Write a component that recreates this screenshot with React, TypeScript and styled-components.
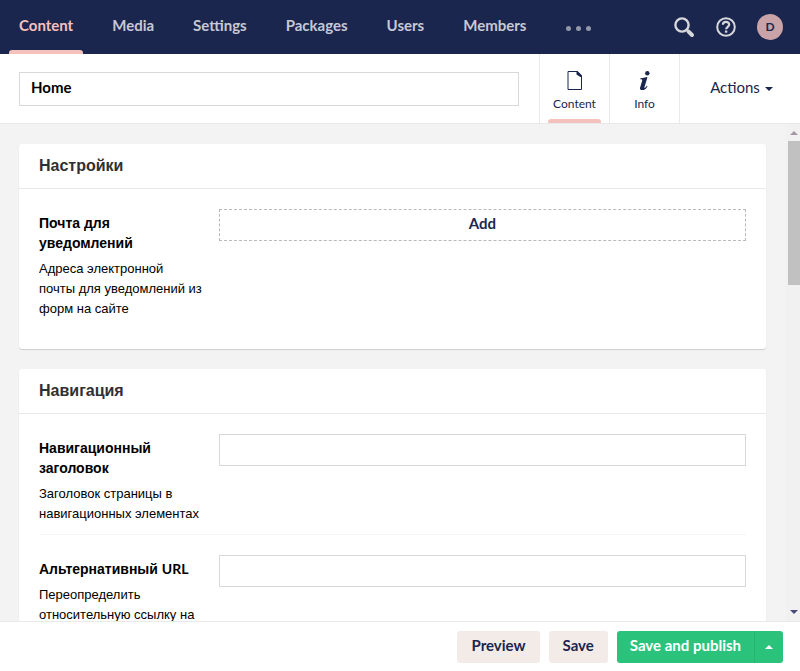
import React, { useState } from "react";
import styled, { createGlobalStyle } from "styled-components";

const LATIN = 'Lato, "Liberation Sans", sans-serif';
const CYRILLIC = '"Liberation Sans", Arial, sans-serif';
const NAVY = "#1b264f";
const PINK = "#f5c1bc";

const GlobalStyle = createGlobalStyle`
  *, *::before, *::after { box-sizing: border-box; }
  html, body, #root { height: 100%; margin: 0; }
  body { background: #fff; color: #000; font: 15px/20px ${LATIN}; overflow: hidden; }
  button, input { font: inherit; color: inherit; margin: 0; border-radius: 0; }
  button { padding: 0; border: 0; background: none; cursor: pointer; }
  h2, p { margin: 0; }
`;

const Shell = styled.div`
  display: flex;
  flex-direction: column;
  height: 100vh;
`;

const TopBar = styled.header`
  display: flex;
  flex: none;
  align-items: stretch;
  justify-content: space-between;
  height: 54px;
  padding-right: 17px;
  background: ${NAVY};
`;

const Sections = styled.nav`
  display: flex;
`;

const SectionLink = styled.a<{ $active?: boolean }>`
  display: flex;
  flex-direction: column;
  justify-content: space-between;
  padding: 15px 10px 0 9px;
  color: ${(p) => (p.$active ? PINK : "#c6c9d3")};
  font-weight: 700;
  text-decoration: none;

  span { padding: 0 10px; }

  &::after {
    content: "";
    height: 4px;
    border-radius: 3px 3px 0 0;
    background: ${(p) => (p.$active ? PINK : "transparent")};
  }
`;

const MoreButton = styled.button`
  display: flex;
  align-items: center;
  gap: 5px;
  padding: 3px 20px 0;

  i {
    width: 5px;
    height: 5px;
    border-radius: 50%;
    background: #9297a9;
  }
`;

const Tools = styled.div`
  display: flex;
  align-items: center;
  gap: 21px;
`;

const ToolButton = styled.button`
  display: flex;
  color: #d6d7da;
`;

const Avatar = styled.button`
  width: 26px;
  height: 26px;
  border-radius: 50%;
  background: #c9a3a7;
  color: ${NAVY};
  font-size: 12px;
  font-weight: 700;
  line-height: 26px;
`;

const EditorHeader = styled.div`
  display: flex;
  flex: none;
  height: 70px;
  padding-left: 19px;
  border-bottom: 1px solid #e9e9eb;
`;

const NameInput = styled.input`
  flex: 1;
  min-width: 0;
  height: 34px;
  margin: 18px 20px 0 0;
  padding: 0 11px 4px;
  border: 1px solid #d8d7d9;
  font-weight: 700;
  outline: none;
`;

const Tab = styled.button<{ $active?: boolean }>`
  display: flex;
  flex-direction: column;
  align-items: center;
  width: 70px;
  padding: 16px 8px 0;
  border-left: 1px solid #e9e9eb;
  color: ${NAVY};
  font-size: 12px;

  svg { flex: none; margin-bottom: 4px; }

  &::after {
    content: "";
    align-self: stretch;
    height: 4px;
    margin-top: auto;
    border-radius: 3px 3px 0 0;
    background: ${(p) => (p.$active ? PINK : "transparent")};
  }
`;

const ActionsButton = styled.button`
  display: flex;
  align-items: center;
  justify-content: center;
  gap: 5px;
  width: 121px;
  padding: 0 0 3px 3px;
  border-left: 1px solid #e9e9eb;
  color: ${NAVY};

  span { margin-top: 3px; }
`;

const Caret = styled.span<{ $up?: boolean }>`
  border: 4px solid transparent;
  border-width: ${(p) => (p.$up ? "0 4px 4px" : "4px 4px 0")};
  border-${(p) => (p.$up ? "bottom" : "top")}-color: currentColor;
`;

const Workspace = styled.div`
  display: flex;
  flex: 1;
  min-height: 0;
  background: #f3f3f3;
`;

const Pane = styled.main`
  display: flex;
  flex: 1;
  flex-direction: column;
  gap: 20px;
  min-width: 0;
  padding: 20px 20px 20px 19px;
  overflow: hidden;
`;

const ScrollTrack = styled.div`
  display: flex;
  flex-direction: column;
  align-items: center;
  width: 14px;
  padding: 7px 0 7px 2px;
  background: #f1f1f1;
  color: #a597a5;
`;

const ScrollThumb = styled.div`
  align-self: stretch;
  flex: 0 1 144px;
  margin: 6px 0 auto;
  background: #c1c1c1;
`;

const ScrollDown = styled.span`
  display: flex;
  color: #484879;
`;

const Card = styled.section`
  flex: none;
  border-radius: 3px;
  background: #fff;
  box-shadow: 0 1px 1px rgba(0, 0, 0, 0.16);
`;

const CardTitle = styled.h2`
  padding: 12px 20px;
  border-bottom: 1px solid #e9e9eb;
  color: #303033;
  font: 700 16px/20px ${CYRILLIC};
`;

const Fields = styled.div`
  padding: 0 20px 20px;
`;

const FieldRow = styled.div`
  display: grid;
  grid-template-columns: 165px 1fr;
  gap: 15px;
  align-items: start;
  padding: 20px 0 10px;

  & + & { border-top: 1px solid #f6f4f4; }
`;

const FieldText = styled.div`
  padding-top: 4px;
`;

const FieldLabel = styled.label`
  display: block;
  margin-bottom: 6px;
  font: 700 14px/20px ${CYRILLIC};

  span { font-family: ${LATIN}; }
`;

const FieldHelp = styled.p`
  font: 13px/20px ${CYRILLIC};
  white-space: pre-line;
`;

const TextInput = styled.input`
  width: 100%;
  height: 32px;
  padding: 4px 6px;
  border: 1px solid #d8d7d9;
  outline: none;
`;

const AddButton = styled.button`
  width: 100%;
  height: 32px;
  padding-bottom: 4px;
  border: 1px dashed #b9b8ba;
  color: ${NAVY};
  font-weight: 700;
`;

const Footer = styled.footer`
  display: flex;
  flex: none;
  justify-content: flex-end;
  gap: 9px;
  padding: 9px 17px 8px;
  border-top: 1px solid #e9e9eb;
`;

const FooterButton = styled.button`
  height: 32px;
  padding: 0 14px 4px;
  border-radius: 3px;
  background: #f3ebe8;
  color: ${NAVY};
  font-weight: 700;
`;

const SplitButton = styled.div`
  display: flex;
  overflow: hidden;
  border-radius: 3px;
  background: #2bc37c;
  color: #fff;
`;

const PublishButton = styled.button`
  padding: 0 13px 4px;
  font-weight: 700;
`;

const PublishMenuButton = styled.button`
  display: flex;
  align-items: center;
  justify-content: center;
  width: 29px;
  border-left: 1px solid #27b372;
`;

const SearchIcon = () => (
  <svg width="21" height="21" viewBox="0 0 21 21" fill="none" stroke="currentColor" aria-hidden="true">
    <circle cx="8" cy="8" r="6.6" strokeWidth="2.4" />
    <path d="M12.8 12.8l1.6 1.6" strokeWidth="2.4" />
    <path d="M14.6 14.6l3.4 3.400" strokeWidth="4" strokeLinecap="round" />
  </svg>
);

const HelpIcon = () => (
  <svg width="20" height="20" viewBox="0 0 20 20" fill="none" stroke="currentColor" aria-hidden="true">
    <circle cx="10" cy="10" r="8.8" strokeWidth="2" />
    <path d="M6.9 7.8C6.9 5.9 8.2 4.9 10 4.9s3.2 1 3.2 2.7c0 2.1-3.1 2.3-3.1 4.7" strokeWidth="2.2" />
    <path d="M8.9 13.5h2.4v2.2H8.9z" fill="currentColor" stroke="none" />
  </svg>
);

const DocumentIcon = () => (
  <svg width="20" height="20" viewBox="0 0 20 20" aria-hidden="true">
    <path d="M3 1.5h9l4.500 4.500v13.500H3z" fill="#fff" stroke={NAVY} />
    <path d="M11.500 1h1l4.500 4.600V7h-1.600l-3.900-2.600z" fill={NAVY} />
  </svg>
);

const InfoIcon = () => (
  <svg width="20" height="20" viewBox="0 0 20 20" fill={NAVY} aria-hidden="true">
    <circle cx="12.300" cy="3.200" r="2.200" />
    <path d="M5.400 8.300c2.400-.1 4.400-.5 6.600-1.200l.4.3-2.900 9.700c-.2.700 0 1 .4.800.6-.3 1.300-1.200 1.900-2.200l.7.500c-1.500 2.700-3 4-5 4-2.100 0-2.900-1-2.300-2.900l1.900-6.400c.3-1.100.1-1.600-.8-1.600-.3 0-.6.1-.9.200z" />
  </svg>
);

const SECTIONS = ["Content", "Media", "Settings", "Packages", "Users", "Members"];

export default function App() {
  const [name, setName] = useState("Home");

  return (
    <>
      <GlobalStyle />
      <Shell>
        <TopBar>
          <Sections aria-label="Sections">
            {SECTIONS.map((s, i) => (
              <SectionLink key={s} href={`#${s.toLowerCase()}`} $active={i === 0}>
                <span>{s}</span>
              </SectionLink>
            ))}
            <MoreButton aria-label="More sections"><i /><i /><i /></MoreButton>
          </Sections>
          <Tools>
            <ToolButton aria-label="Search"><SearchIcon /></ToolButton>
            <ToolButton aria-label="Help"><HelpIcon /></ToolButton>
            <Avatar aria-label="Profile">D</Avatar>
          </Tools>
        </TopBar>

        <EditorHeader>
          <NameInput aria-label="Name" value={name} onChange={(e) => setName(e.target.value)} />
          <Tab $active><DocumentIcon />Content</Tab>
          <Tab><InfoIcon />Info</Tab>
          <ActionsButton>Actions<Caret /></ActionsButton>
        </EditorHeader>

        <Workspace>
          <Pane>
            <Card>
              <CardTitle>Настройки</CardTitle>
              <Fields>
                <FieldRow>
                  <FieldText>
                    <FieldLabel htmlFor="mail">Почта для уведомлений</FieldLabel>
                    <FieldHelp>{"Адреса электронной\nпочты для уведомлений из\nформ на сайте"}</FieldHelp>
                  </FieldText>
                  <AddButton id="mail">Add</AddButton>
                </FieldRow>
              </Fields>
            </Card>
            <Card>
              <CardTitle>Навигация</CardTitle>
              <Fields>
                <FieldRow>
                  <FieldText>
                    <FieldLabel htmlFor="nav-title">Навигационный заголовок</FieldLabel>
                    <FieldHelp>{"Заголовок страницы в\nнавигационных элементах"}</FieldHelp>
                  </FieldText>
                  <TextInput id="nav-title" />
                </FieldRow>
                <FieldRow>
                  <FieldText>
                    <FieldLabel htmlFor="alt-url">Альтернативный <span>URL</span></FieldLabel>
                    <FieldHelp>{"Переопределить\nотносительную ссылку на"}</FieldHelp>
                  </FieldText>
                  <TextInput id="alt-url" />
                </FieldRow>
              </Fields>
            </Card>
          </Pane>
          <ScrollTrack aria-hidden="true">
            <Caret $up />
            <ScrollThumb />
            <ScrollDown><Caret /></ScrollDown>
          </ScrollTrack>
        </Workspace>

        <Footer>
          <FooterButton>Preview</FooterButton>
          <FooterButton>Save</FooterButton>
          <SplitButton>
            <PublishButton>Save and publish</PublishButton>
            <PublishMenuButton aria-label="More publishing options"><Caret $up /></PublishMenuButton>
          </SplitButton>
        </Footer>
      </Shell>
    </>
  );
}
